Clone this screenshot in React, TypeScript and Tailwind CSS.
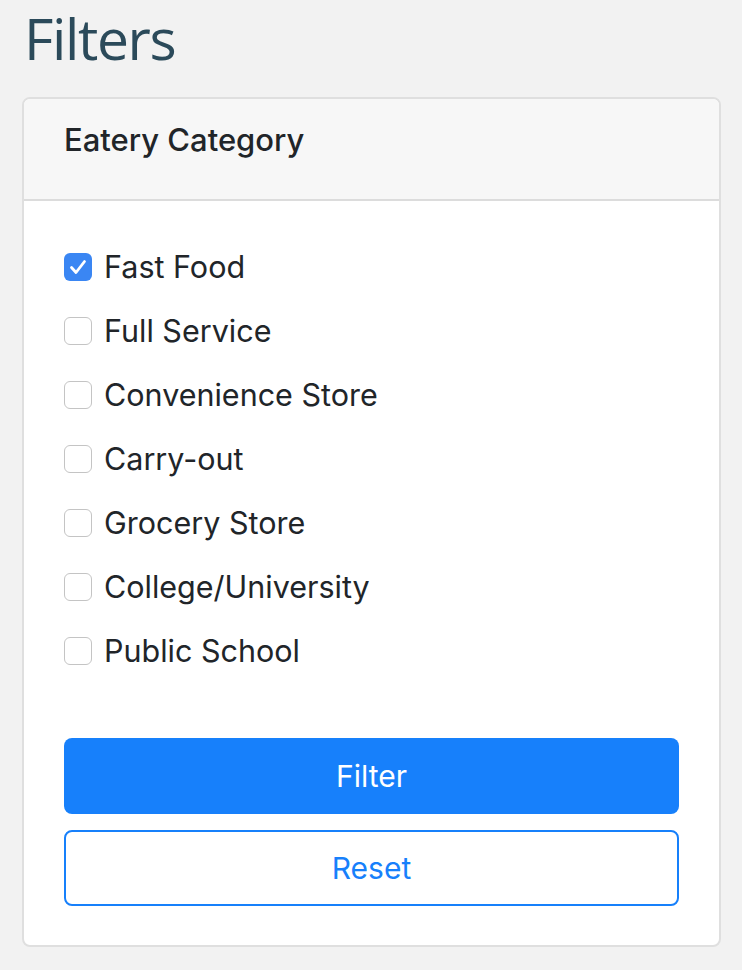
import React, { useState } from 'react';

const categories = [
    "Fast Food",
    "Full Service",
    "Convenience Store",
    "Carry-out",
    "Grocery Store",
    "College/University",
    "Public School",
];

function CheckBox({ checked }: { checked: boolean }) {
    if (checked) {
        return (
            <span className="w-7 h-7 shrink-0 rounded-[6px] bg-[#3a86f3] flex items-center justify-center">
                <svg width="28" height="28" viewBox="0 0 28 28" fill="none">
                    <path d="M7.5 14.5 L12 19.5 L20.5 8.5" stroke="white" strokeWidth="2.8" strokeLinecap="round" strokeLinejoin="round" />
                </svg>
            </span>
        );
    }
    return <span className="w-7 h-7 shrink-0 rounded-[6px] bg-white border-[1.5px] border-[#c4c4c4]" />;
}

export default function App() {
    const [selected, setSelected] = useState<string[]>(["Fast Food"]);

    const toggle = (name: string) =>
        setSelected((s) => (s.includes(name) ? s.filter((x) => x !== name) : [...s, name]));

    return (
        <div className="w-[742px] h-[970px] bg-[#f2f2f2] px-[22px]" style={{ fontFamily: "Inter, 'Noto Sans', sans-serif" }}>
            <h1
                className="text-[57px] leading-[76px] text-[#2b4a5a] m-0 pl-[2px] tracking-[-1.4px]"
                style={{ fontFamily: "'Open Sans', sans-serif" }}
            >
                Filters
            </h1>

            {/* card */}
            <div className="mt-[21px] w-[699px] bg-white border-2 border-[#dfdfdf] rounded-[8px] overflow-hidden">
                <div className="h-[102px] bg-[#f7f7f7] border-b-2 border-[#dcdcdc] pt-[21px] px-10">
                    <h2 className="text-[31px] leading-[40px] font-medium text-[#212529] m-0">Eatery Category</h2>
                </div>

                <div className="px-10 pt-[34px] pb-[39px] flex flex-col">
                    <div className="flex flex-col">
                        {categories.map((c) => (
                            <label key={c} className="h-16 flex items-center gap-[12px] cursor-pointer" onClick={() => toggle(c)}>
                                <CheckBox checked={selected.includes(c)} />
                                <span className="text-[30.5px] text-[#212529]">{c}</span>
                            </label>
                        ))}
                    </div>

                    <button className="mt-[55px] h-[76px] w-full rounded-[8px] bg-[#1780fb] text-white text-[30px]">
                        Filter
                    </button>
                    <button className="mt-[16px] h-[76px] w-full rounded-[8px] border-2 border-[#1780fb] bg-white text-[#1780fb] text-[30px]">
                        Reset
                    </button>
                </div>
            </div>
        </div>
    );
}
